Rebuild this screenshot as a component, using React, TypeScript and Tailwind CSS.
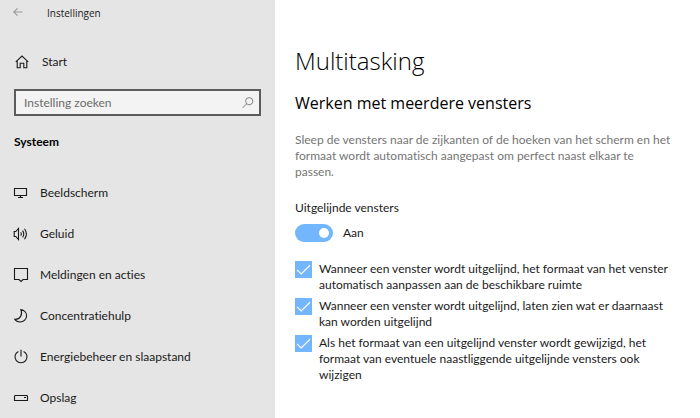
import { ReactNode, useState } from "react";

type IconProps = { children: ReactNode; className?: string };

const Icon: React.FC<IconProps> = ({ children, className = "size-4" }) => (
  <svg
    viewBox="0 0 16 16"
    fill="none"
    stroke="currentColor"
    strokeWidth="1.1"
    aria-hidden="true"
    className={`shrink-0 overflow-visible ${className}`}
  >
    {children}
  </svg>
);

const navItems = [
  {
    label: "Beeldscherm",
    icon: <path d="M1.5 3.5h12v7h-12zM5 12.5h5M7.5 10.5v2" />,
  },
  {
    label: "Geluid",
    icon: (
      <path d="M1.2 5.5h1.6l2.7-3v11l-2.7-3H1.2zM7.8 6.3q1.1 1.7 0 3.4M9.6 4.6q2.3 3.4 0 6.8M11.5 2.8q3.8 5.2 0 10.4" />
    ),
  },
  {
    label: "Meldingen en acties",
    icon: <path d="M1.5 1.5h13v11H10l-2 2-2-2H1.5z" />,
  },
  {
    label: "Concentratiehulp",
    icon: (
      <path d="M7.9 1.6c3.2.5 5.7 3 5.7 6.1 0 3.6-2.9 6.3-6.5 6.3-2.3 0-4.3-.9-5.4-2.7C7 11.7 9.9 7 7.9 1.6z" />
    ),
  },
  {
    label: "Energiebeheer en slaapstand",
    icon: <path d="M8 .8v6.7M5.4 2.4a6 6 0 1 0 5.2 0" />,
  },
  {
    label: "Opslag",
    icon: <path d="M2 5.5h12l.5 1v4h-13v-4zM11 7.5h2" />,
  },
];

const snapOptions = [
  "Wanneer een venster wordt uitgelijnd, het formaat van het venster automatisch aanpassen aan de beschikbare ruimte",
  "Wanneer een venster wordt uitgelijnd, laten zien wat er daarnaast kan worden uitgelijnd",
  "Als het formaat van een uitgelijnd venster wordt gewijzigd, het formaat van eventuele naastliggende uitgelijnde vensters ook wijzigen",
];

const Sidebar: React.FC = () => (
  <aside className="w-[275px] shrink-0 bg-[#e5e5e5]">
    <header className="flex h-7 items-center gap-[21px] pl-[10px]">
      <button type="button" aria-label="Terug" className="pb-1 text-[#9a9a9a]">
        <Icon>
          <path d="M12.5 8H3.8M7.5 4.3L3.8 8l3.7 3.7" />
        </Icon>
      </button>
      <span className="font-['Open_Sans',sans-serif] text-[10px]">Instellingen</span>
    </header>
    <a href="#start" className="mt-6 flex h-5 items-center gap-3 pl-[14px]">
      <Icon>
        <path d="M1.8 7.8L8 2l6.2 5.8M3.2 6.8v7h3V9.2h3.6v4.6h3v-7" />
      </Icon>
      Start
    </a>
    <div className="mx-[14px] mt-[17px] flex h-[27px] items-center border-2 border-[#5c5c5c] bg-[#f3f3f3] px-2">
      <input
        type="text"
        aria-label="Instelling zoeken"
        placeholder="Instelling zoeken"
        className="min-w-0 flex-1 bg-transparent outline-none placeholder:text-[#6b6b6b]"
      />
      <Icon className="mr-[-3px] size-3 text-[#6b6b6b]">
        <circle cx="9.6" cy="5.6" r="4.8" />
        <path d="M6.2 9L.8 14.6" />
      </Icon>
    </div>
    <h2 className="mt-4 h-5 pl-[14px] leading-5 font-bold text-black">Systeem</h2>
    <nav className="mt-5">
      {navItems.map((item) => (
        <a
          key={item.label}
          href="#systeem"
          className="flex h-[41px] items-center gap-[11px] pl-[13px]"
        >
          <Icon>{item.icon}</Icon>
          {item.label}
        </a>
      ))}
    </nav>
  </aside>
);

const App: React.FC = () => {
  const [snap, setSnap] = useState(true);

  return (
    <div className="flex min-h-screen bg-white font-['Lato','Open_Sans',sans-serif] text-xs text-[#1a1a1a] [font-variant-ligatures:none]">
      <Sidebar />
      <main className="min-w-0 flex-1 pt-[45px] pr-5 pl-5">
        <h1 className="font-['Open_Sans',sans-serif] text-2xl font-light text-black">
          Multitasking
        </h1>
        <h2 className="mt-[14px] font-['Open_Sans',sans-serif] text-base text-black">
          Werken met meerdere vensters
        </h2>
        <p className="mt-[17px] pr-2 leading-4 text-[#757575]">
          Sleep de vensters naar de zijkanten of de hoeken van het scherm en het
          formaat wordt automatisch aangepast om perfect naast elkaar te passen.
        </p>
        <label htmlFor="snap" className="mt-5 block leading-4">
          Uitgelijnde vensters
        </label>
        <div className="mt-2 flex h-[18px] items-center gap-[10px]">
          <input
            id="snap"
            type="checkbox"
            role="switch"
            checked={snap}
            onChange={() => setSnap(!snap)}
            className="flex h-[18px] w-[38px] appearance-none items-center rounded-full bg-[#999999] px-1 before:size-[10px] before:rounded-full before:bg-white checked:justify-end checked:bg-[#73b6fd]"
          />
          <span>{snap ? "Aan" : "Uit"}</span>
        </div>
        <div className="mt-[19px] flex flex-col gap-[5px]">
          {snapOptions.map((option) => (
            <label key={option} className="flex gap-[7px] leading-4">
              <span className="grid size-[17px] shrink-0">
                <input
                  type="checkbox"
                  defaultChecked
                  className="peer col-start-1 row-start-1 size-[17px] appearance-none border border-[#73b6fd] checked:bg-[#73b6fd]"
                />
                <svg
                  viewBox="0 0 17 17"
                  fill="none"
                  stroke="white"
                  strokeWidth="1.2"
                  aria-hidden="true"
                  className="pointer-events-none invisible col-start-1 row-start-1 size-[17px] peer-checked:visible"
                >
                  <path d="M2 8.8l4.2 4.2L15 4.3" />
                </svg>
              </span>
              <span>{option}</span>
            </label>
          ))}
        </div>
      </main>
    </div>
  );
};

export default App;
